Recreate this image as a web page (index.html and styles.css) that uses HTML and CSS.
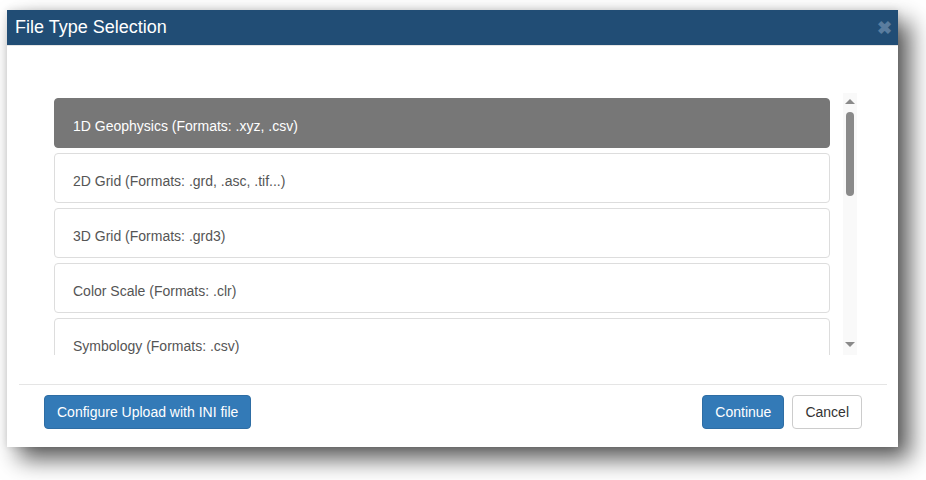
FILE: index.html
```html
<!DOCTYPE html>
<html lang="en">
    <head>
        <title>File Type Selection</title>
        <link rel="stylesheet" href="styles.css">
    </head>
    <body>
        <div class="dialog">
            <div class="dialog-header">
                <span class="dialog-title">File Type Selection</span>
                <span class="close">&#x2716;</span>
            </div>
            <div class="dialog-body">
                <div class="picker">
                    <ul class="type-list">
                        <li class="type-item active">1D Geophysics (Formats: .xyz, .csv)</li>
                        <li class="type-item">2D Grid (Formats: .grd, .asc, .tif...)</li>
                        <li class="type-item">3D Grid (Formats: .grd3)</li>
                        <li class="type-item">Color Scale (Formats: .clr)</li>
                        <li class="type-item">Symbology (Formats: .csv)</li>
                    </ul>
                    <div class="scrollbar">
                        <span class="arrow up"></span>
                        <div class="track"><div class="thumb"></div></div>
                        <span class="arrow down"></span>
                    </div>
                </div>
            </div>
            <div class="dialog-footer">
                <button class="btn btn-primary">Configure Upload with INI file</button>
                <div class="spacer"></div>
                <button class="btn btn-primary">Continue</button>
                <button class="btn btn-default">Cancel</button>
            </div>
        </div>
    </body>
</html>
```
FILE: styles.css
```css
body {
    margin: 0;
    padding: 10px 28px 33px 7px;
    background-color: #fff;
    font-family: "Liberation Sans", Arial, sans-serif;
    font-size: 14px;
    color: #333;
}
.dialog {
    background-color: #fff;
    box-shadow: 12px 12px 22px rgba(0, 0, 0, 0.65), 0 0 8px rgba(0, 0, 0, 0.12);
}
.dialog-header {
    display: flex;
    align-items: center;
    height: 35px;
    padding: 0 6px 0 8px;
    background-color: #214d75;
    border-bottom: 1px solid #e5e5e5;
}
.dialog-title {
    flex: 1;
    color: #fff;
    font-size: 18px;
}
.close {
    color: #5a7d9f;
    font-size: 18px;
    font-weight: bold;
    margin-top: 1px;
}
.dialog-body {
    padding: 47px 41px 29px 47px;
}
.picker {
    display: flex;
    gap: 13px;
    height: 262px;
}
.type-list {
    flex: 1;
    list-style: none;
    margin: 0;
    padding: 5px 0 0;
    overflow: hidden;
}
.type-item {
    height: 48px;
    line-height: 54px;
    overflow: hidden;
    margin-bottom: 5px;
    padding: 0 18px;
    border: 1px solid #ddd;
    border-radius: 4px;
    color: #555;
}
.type-item.active {
    background-color: #777;
    border-color: #777;
    color: #fff;
}
.scrollbar {
    display: flex;
    flex-direction: column;
    align-items: center;
    width: 14px;
    background-color: #f9f9f9;
}
.arrow {
    width: 0;
    height: 0;
    border-left: 5px solid transparent;
    border-right: 5px solid transparent;
}
.arrow.up {
    margin: 6px 0 8px;
    border-bottom: 5px solid #8a8a8a;
}
.arrow.down {
    margin: 6px 0 8px;
    border-top: 5px solid #8a8a8a;
}
.track {
    flex: 1;
    width: 8px;
}
.thumb {
    height: 84px;
    border-radius: 4px;
    background-color: #8a8a8a;
}
.dialog-footer {
    display: flex;
    gap: 8px;
    margin: 0 11px 0 12px;
    padding: 10px 25px 18px 25px;
    border-top: 1px solid #e5e5e5;
}
.spacer {
    flex: 1;
}
.btn {
    height: 34px;
    padding: 0 12px;
    border: 1px solid transparent;
    border-radius: 4px;
    font-family: inherit;
    font-size: 14px;
    white-space: nowrap;
}
.btn-primary {
    background-color: #337ab7;
    border-color: #2e6da4;
    color: #fff;
}
.btn-default {
    background-color: #fff;
    border-color: #ccc;
    color: #333;
}
```
